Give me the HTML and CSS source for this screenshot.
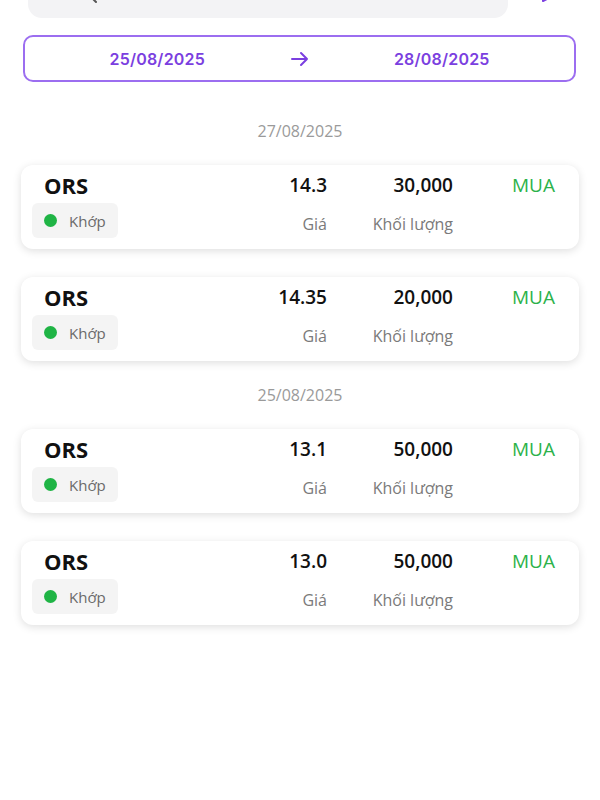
FILE: index.html
```html
<!DOCTYPE html>
<html lang="vi">
<head>
<meta charset="utf-8">
<title>Lịch sử lệnh</title>
<link rel="stylesheet" href="styles.css">
</head>
<body>
<div class="page">
  <div class="topbar">
    <div class="search">
      <svg class="search-icon" width="20" height="20" viewBox="0 0 20 20"><circle cx="8" cy="8" r="6" fill="none" stroke="#555" stroke-width="2"/><line x1="12.5" y1="12.5" x2="17" y2="17" stroke="#555" stroke-width="2" stroke-linecap="round"/></svg>
    </div>
    <svg class="filter-icon" width="22" height="22" viewBox="0 0 22 22"><path d="M3 4h16l-6 7v6l-4 2v-8z" fill="none" stroke="#7b3fe0" stroke-width="2" stroke-linejoin="round"/></svg>
  </div>

  <div class="range">
    <span class="range-date">25/08/2025</span>
    <svg class="range-arrow" width="20" height="16" viewBox="0 0 20 16"><path d="M2 8h15M11 2l6 6-6 6" fill="none" stroke="#7b3fe0" stroke-width="2" stroke-linecap="round" stroke-linejoin="round"/></svg>
    <span class="range-date">28/08/2025</span>
  </div>

  <div class="day">27/08/2025</div>
  <div class="card">
    <div class="sym">ORS</div>
    <div class="num">14.3</div>
    <div class="num">30,000</div>
    <div class="side">MUA</div>
    <div class="badge-cell"><span class="badge"><span class="dot"></span>Khớp</span></div>
    <div class="label">Giá</div>
    <div class="label">Khối lượng</div>
    <div></div>
  </div>
  <div class="card">
    <div class="sym">ORS</div>
    <div class="num">14.35</div>
    <div class="num">20,000</div>
    <div class="side">MUA</div>
    <div class="badge-cell"><span class="badge"><span class="dot"></span>Khớp</span></div>
    <div class="label">Giá</div>
    <div class="label">Khối lượng</div>
    <div></div>
  </div>

  <div class="day">25/08/2025</div>
  <div class="card">
    <div class="sym">ORS</div>
    <div class="num">13.1</div>
    <div class="num">50,000</div>
    <div class="side">MUA</div>
    <div class="badge-cell"><span class="badge"><span class="dot"></span>Khớp</span></div>
    <div class="label">Giá</div>
    <div class="label">Khối lượng</div>
    <div></div>
  </div>
  <div class="card">
    <div class="sym">ORS</div>
    <div class="num">13.0</div>
    <div class="num">50,000</div>
    <div class="side">MUA</div>
    <div class="badge-cell"><span class="badge"><span class="dot"></span>Khớp</span></div>
    <div class="label">Giá</div>
    <div class="label">Khối lượng</div>
    <div></div>
  </div>
</div>
</body>
</html>
```
FILE: styles.css
```css
* { box-sizing: border-box; }
html, body { margin: 0; padding: 0; background: #fff; }
body {
  font-family: "Open Sans", "Noto Sans", sans-serif;
  color: #111;
  width: 600px;
  height: 800px;
  overflow: hidden;
}
.page { display: flex; flex-direction: column; }

.topbar {
  display: flex;
  align-items: center;
  margin-top: -26px;
  height: 44px;
  padding-left: 28px;
}
.search {
  width: 480px;
  height: 44px;
  background: #f3f3f5;
  border-radius: 14px;
  display: flex;
  align-items: center;
  padding-left: 51px;
}
.search-icon { margin-top: -3px; }
.filter-icon { margin-left: 26px; margin-top: -6px; }

.range {
  margin: 17px 24px 0 23px;
  height: 47px;
  border: 2px solid #9c6ef0;
  border-radius: 10px;
  display: grid;
  grid-template-columns: 1fr auto 1fr;
  align-items: center;
  justify-items: center;
}
.range-date {
  font-family: "Inter", "Open Sans", sans-serif;
  font-weight: 600;
  font-size: 16px;
  color: #7b3fe0;
  letter-spacing: 0.2px;
}
.range-arrow { display: block; }

.day {
  text-align: center;
  color: #9a9a9a;
  font-size: 16px;
  line-height: 24px;
  margin: 37px 0 22px;
}
.card + .day { margin-top: 22px; }

.card {
  margin: 0 21px;
  height: 84px;
  background: #fff;
  border-radius: 12px;
  box-shadow: 0 2px 9px rgba(0, 0, 0, 0.13);
  padding: 7px 24px 0 11px;
  display: grid;
  grid-template-columns: 1fr 120px 126px 102px;
  grid-template-rows: 26px 35px;
  row-gap: 5px;
  align-items: center;
}
.card + .card { margin-top: 28px; }
.sym {
  font-weight: 700;
  font-size: 22px;
  padding-left: 12px;
  line-height: 26px;
}
.num {
  text-align: right;
  font-weight: 600;
  font-size: 19px;
  line-height: 26px;
}
.side {
  text-align: right;
  font-size: 19px;
  color: #2cb24a;
  line-height: 26px;
}
.badge-cell { display: flex; }
.badge {
  display: inline-flex;
  align-items: center;
  height: 35px;
  padding: 0 12px;
  background: #f4f4f4;
  border-radius: 6px;
  font-size: 15px;
  color: #6a6a6a;
}
.dot {
  width: 13px;
  height: 13px;
  border-radius: 50%;
  background: #1fb445;
  margin-right: 12px;
}
.label {
  text-align: right;
  font-size: 16px;
  color: #7a7a7a;
  line-height: 24px;
  padding-top: 6px;
}
```
